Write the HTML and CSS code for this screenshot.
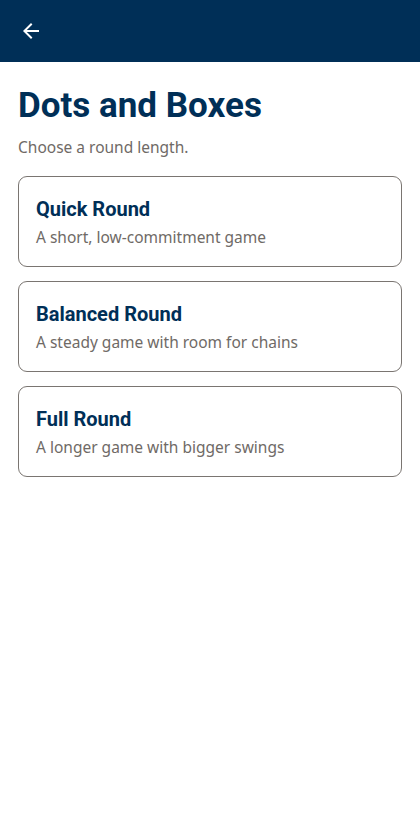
FILE: index.html
```html
<!DOCTYPE html>
<html lang="en">
<head>
<meta charset="utf-8">
<meta name="viewport" content="width=device-width, initial-scale=1">
<title>Dots and Boxes</title>
<link rel="stylesheet" href="styles.css">
</head>
<body>
<header class="app-bar">
  <button class="back" aria-label="Back">
    <svg viewBox="0 0 24 24" width="24" height="24"><path d="M20 11H7.83l5.59-5.59L12 4l-8 8 8 8 1.41-1.41L7.83 13H20v-2z" fill="#fff"/></svg>
  </button>
</header>
<main class="content">
  <h1 class="title">Dots and Boxes</h1>
  <p class="subtitle">Choose a round length.</p>
  <div class="options">
    <button class="option">
      <span class="option-name">Quick Round</span>
      <span class="option-desc">A short, low-commitment game</span>
    </button>
    <button class="option">
      <span class="option-name">Balanced Round</span>
      <span class="option-desc">A steady game with room for chains</span>
    </button>
    <button class="option">
      <span class="option-name">Full Round</span>
      <span class="option-desc">A longer game with bigger swings</span>
    </button>
  </div>
</main>
</body>
</html>
```
FILE: styles.css
```css
* { box-sizing: border-box; }

body {
  margin: 0;
  background: #fff;
  font-family: "Noto Sans", "Open Sans", sans-serif;
}

.app-bar {
  height: 62px;
  background: #002f57;
  display: flex;
  align-items: center;
  padding-left: 19px;
}

.back {
  background: none;
  border: 0;
  padding: 0;
  width: 24px;
  height: 24px;
  display: flex;
  cursor: pointer;
}

.content {
  padding: 23px 18px 22px;
}

.title {
  margin: 0;
  font-family: Roboto, sans-serif;
  font-weight: 700;
  font-size: 35px;
  line-height: 42px;
  color: #002f57;
}

.subtitle {
  margin: 8px 0 0;
  font-size: 15.5px;
  line-height: 24px;
  color: #6f6a66;
}

.options {
  margin-top: 17px;
  display: flex;
  flex-direction: column;
  gap: 14px;
}

.option {
  display: flex;
  flex-direction: column;
  align-items: flex-start;
  height: 91px;
  padding: 2px 17px 0;
  justify-content: center;
  gap: 3px;
  border: 1px solid #7a7571;
  border-radius: 9px;
  background: #fff;
  text-align: left;
  cursor: pointer;
}

.option-name {
  font-family: Roboto, sans-serif;
  font-weight: 700;
  font-size: 20px;
  line-height: 26px;
  color: #002f57;
}

.option-desc {
  font-family: "Noto Sans", "Open Sans", sans-serif;
  font-size: 15.5px;
  line-height: 24px;
  color: #6f6a66;
}
```
